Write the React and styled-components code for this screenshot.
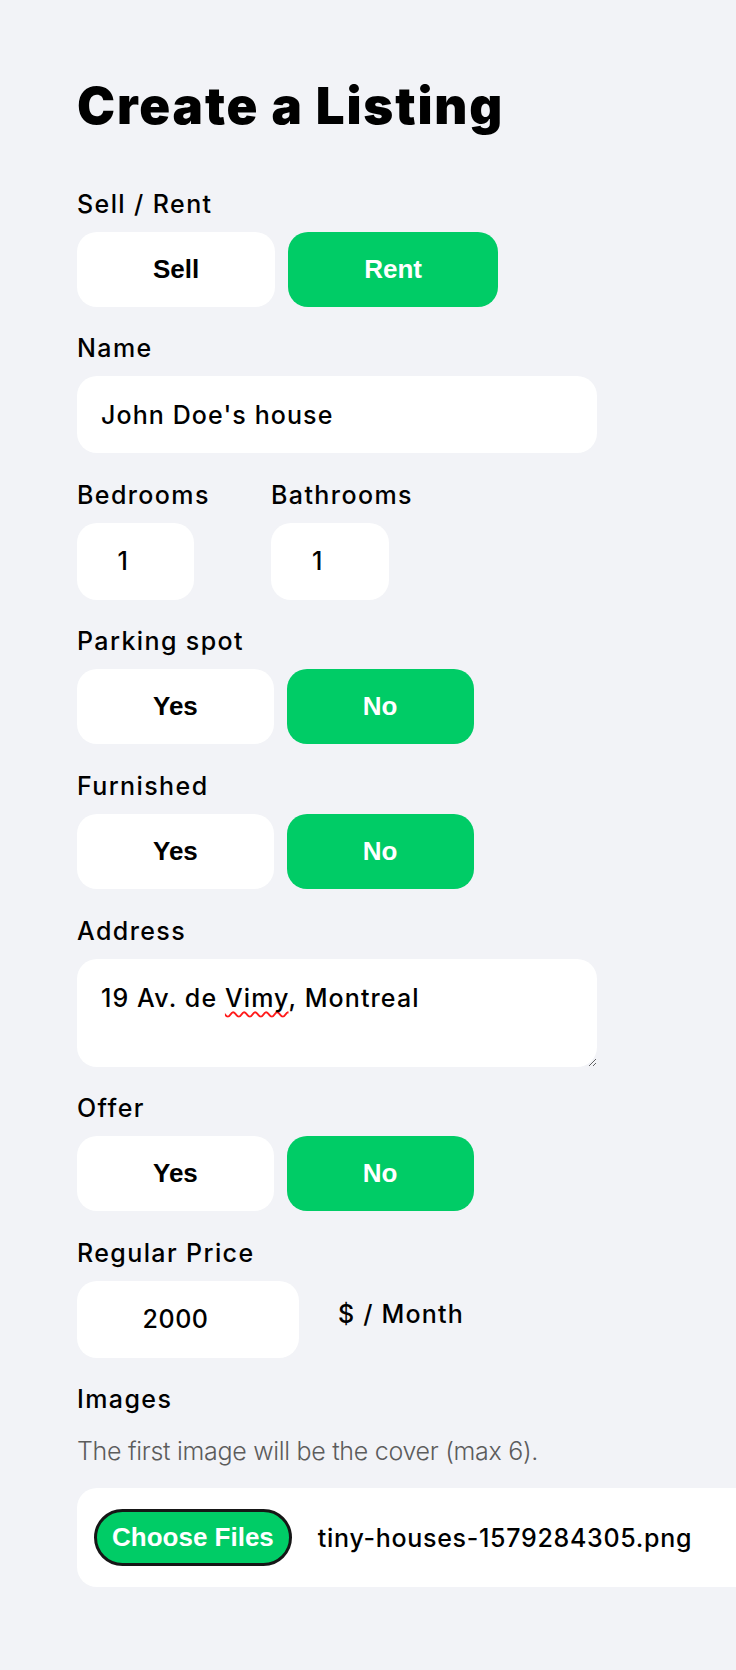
import React from 'react'
import styled, { createGlobalStyle } from 'styled-components'

const GREEN = '#00cc66'

const GlobalStyle = createGlobalStyle`
  html, body {
    margin: 0;
    background: #f2f3f7;
  }
  body {
    overflow-x: hidden;
    font-family: Inter, "Open Sans", sans-serif;
    color: #000;
  }
`

const Page = styled.main`
  padding: 0 0 83px 77px;
`

const Title = styled.h1`
  margin: 75px 0 26px;
  font-size: 51px;
  line-height: 61px;
  font-weight: 900;
  letter-spacing: 1.85px;
`

const Form = styled.form`
  display: flex;
  flex-direction: column;
  align-items: flex-start;
`

const Label = styled.p`
  margin: 26.6px 0 13px;
  font-size: 25px;
  line-height: 30px;
  font-weight: 500;
  letter-spacing: 1.4px;
`

const ToggleRow = styled.div`
  display: flex;
  gap: 13px;
`

const Toggle = styled.button`
  height: 75px;
  padding: 0 76px;
  border: none;
  border-radius: 20px;
  font: 700 26px "Liberation Sans", Arial, sans-serif;
  background: ${p => (p.$active ? GREEN : '#fff')};
  color: ${p => (p.$active ? '#fff' : '#000')};
  cursor: pointer;
`

const TextInput = styled.input`
  box-sizing: border-box;
  width: ${p => p.$w || 520}px;
  height: 77px;
  padding: 0 24px;
  border: none;
  border-radius: 20px;
  background: #fff;
  font: 500 25px Inter, "Open Sans", sans-serif;
  letter-spacing: 1.1px;
  color: #000;
  outline: none;
`

const NumberInput = styled(TextInput)`
  text-align: center;
  padding-right: 49px;
  letter-spacing: 0.6px;
`

const NumberGrid = styled.div`
  display: grid;
  grid-template-columns: 194px auto;
`

const Field = styled.div`
  display: flex;
  flex-direction: column;
  align-items: flex-start;
`

const AddressBox = styled.div`
  box-sizing: border-box;
  width: 520px;
  height: 108px;
  padding: 24px;
  border-radius: 20px;
  background: #fff;
  font-size: 25px;
  line-height: 30px;
  font-weight: 500;
  letter-spacing: 1.1px;
  overflow: auto;
  resize: vertical;
`

const SpellError = styled.span`
  text-decoration: underline wavy #ff1a1a;
  text-decoration-thickness: 1.5px;
  text-underline-offset: 4px;
  text-decoration-skip-ink: none;
`

const PriceRow = styled.div`
  display: flex;
  align-items: center;
  gap: 39px;
`

const Unit = styled.p`
  margin: 0 0 10px;
  font-size: 25px;
  line-height: 30px;
  font-weight: 500;
  letter-spacing: 1.2px;
`

const Hint = styled.p`
  margin: 9px 0 22px;
  font-size: 25px;
  line-height: 30px;
  font-weight: 300;
  letter-spacing: -0.3px;
  color: #5c5c5c;
`

const FileBox = styled.div`
  box-sizing: border-box;
  width: 720px;
  height: 99px;
  padding: 0 17px;
  display: flex;
  align-items: center;
  border-radius: 20px;
  background: #fff;
`

const ChooseButton = styled.button`
  height: 57px;
  padding: 0 15px;
  border: 3px solid #161616;
  border-radius: 999px;
  background: ${GREEN};
  color: #fff;
  font: 700 26px "Liberation Sans", Arial, sans-serif;
  cursor: pointer;
`

const FileName = styled.span`
  margin-left: 26px;
  font-size: 25px;
  font-weight: 500;
  letter-spacing: 0.7px;
`

function ToggleGroup({ first, second, active }) {
  return (
    <ToggleRow>
      <Toggle type="button" $active={active === first}>{first}</Toggle>
      <Toggle type="button" $active={active === second}>{second}</Toggle>
    </ToggleRow>
  )
}

export default function App() {
  return (
    <Page>
      <GlobalStyle />
      <Title>Create a Listing</Title>
      <Form onSubmit={e => e.preventDefault()}>
        <Label>Sell / Rent</Label>
        <ToggleGroup first="Sell" second="Rent" active="Rent" />

        <Label>Name</Label>
        <TextInput defaultValue="John Doe's house" />

        <NumberGrid>
          <Field>
            <Label>Bedrooms</Label>
            <NumberInput $w={117} defaultValue="1" />
          </Field>
          <Field>
            <Label>Bathrooms</Label>
            <NumberInput $w={118} defaultValue="1" />
          </Field>
        </NumberGrid>

        <Label>Parking spot</Label>
        <ToggleGroup first="Yes" second="No" active="No" />

        <Label>Furnished</Label>
        <ToggleGroup first="Yes" second="No" active="No" />

        <Label>Address</Label>
        <AddressBox role="textbox">
          19 Av. de <SpellError>Vimy</SpellError>, Montreal
        </AddressBox>

        <Label>Offer</Label>
        <ToggleGroup first="Yes" second="No" active="No" />

        <Label>Regular Price</Label>
        <PriceRow>
          <NumberInput $w={222} defaultValue="2000" />
          <Unit>$ / Month</Unit>
        </PriceRow>

        <Label>Images</Label>
        <Hint>The first image will be the cover (max 6).</Hint>
        <FileBox>
          <ChooseButton type="button">Choose Files</ChooseButton>
          <FileName>tiny-houses-1579284305.png</FileName>
        </FileBox>
      </Form>
    </Page>
  )
}
